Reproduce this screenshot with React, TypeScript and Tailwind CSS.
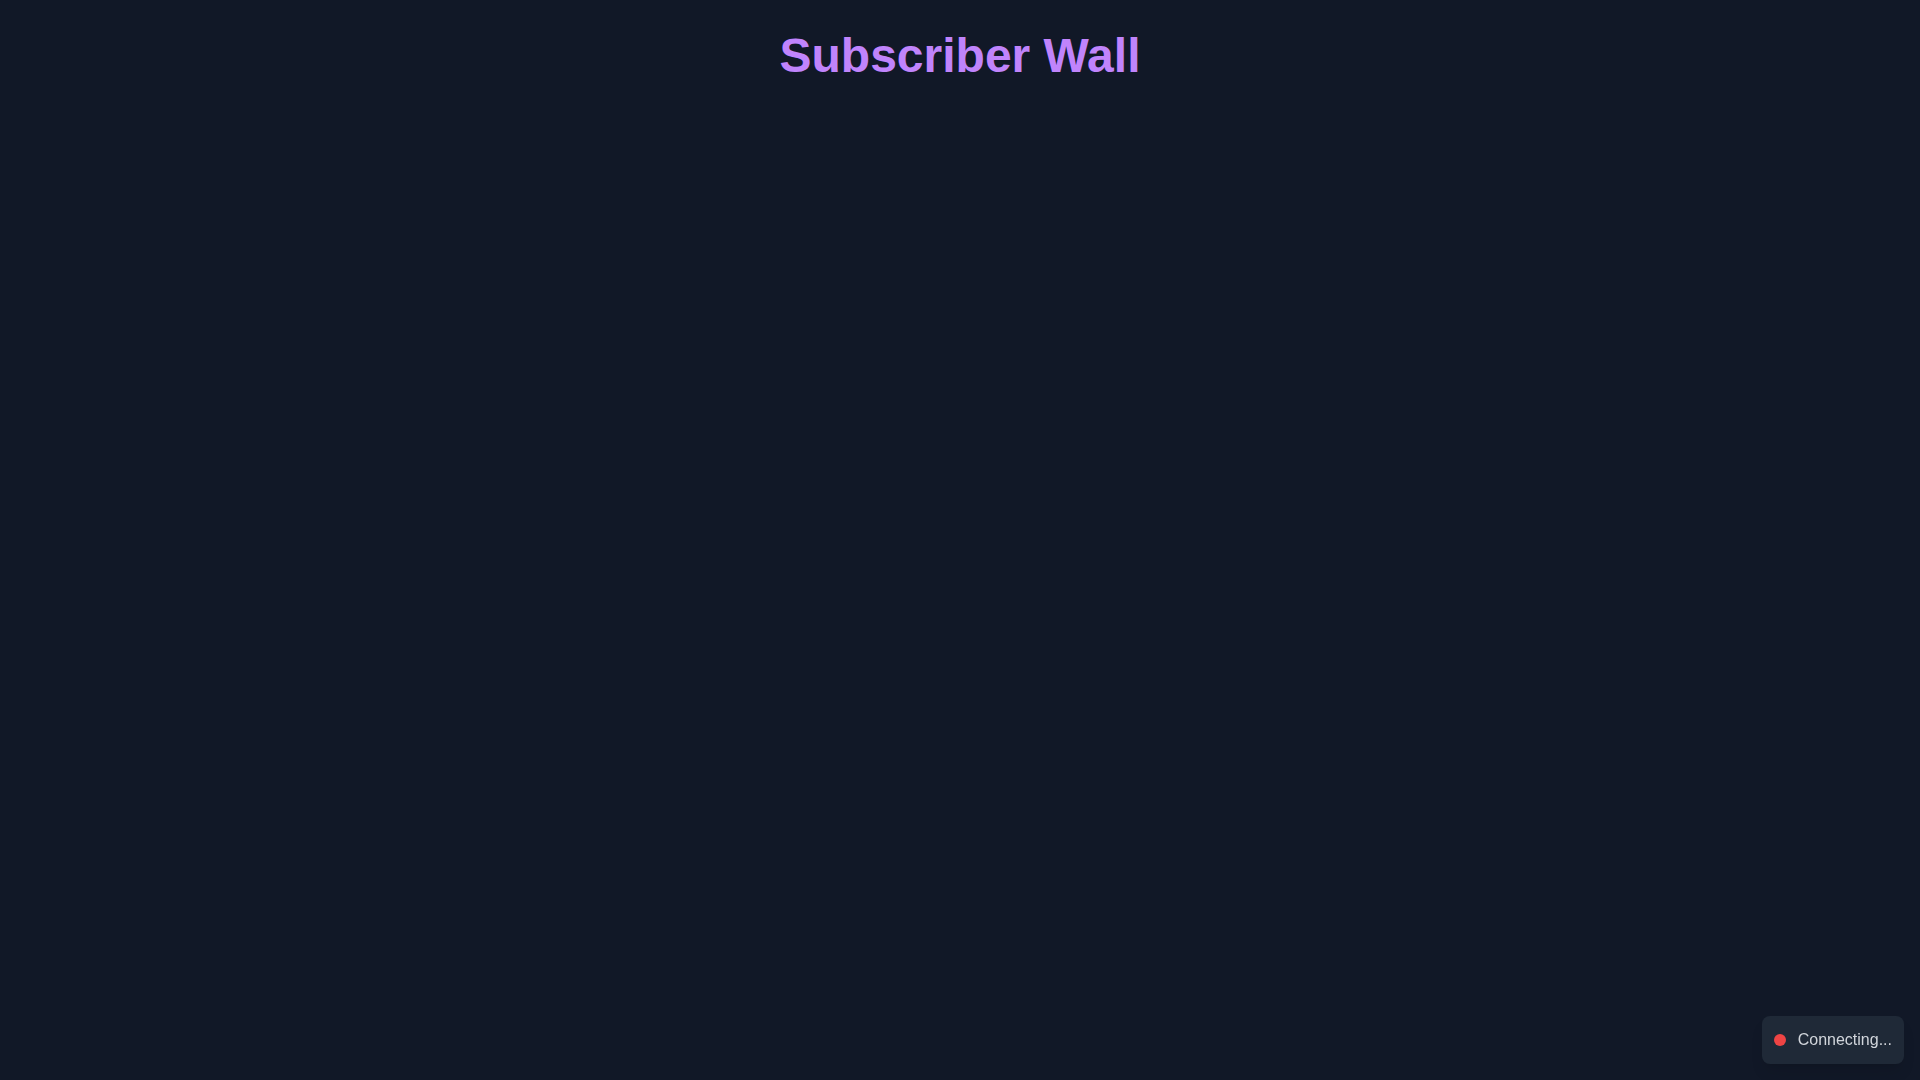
const App = () => {
  return (
    <div className="min-h-screen bg-[#111827] font-['Liberation_Sans',Arial,sans-serif]">
      <header className="pt-8 text-center">
        <h1 className="text-5xl font-bold text-[#c084fc]">Subscriber Wall</h1>
      </header>
      <div className="fixed bottom-4 right-4 flex items-center gap-3 rounded-lg bg-[#1f2937] px-3 py-3 shadow-lg">
        <span className="h-3 w-3 rounded-full bg-[#ef4444]" />
        <span className="text-base text-[#d1d5db]">Connecting...</span>
      </div>
    </div>
  );
};

export default App;
